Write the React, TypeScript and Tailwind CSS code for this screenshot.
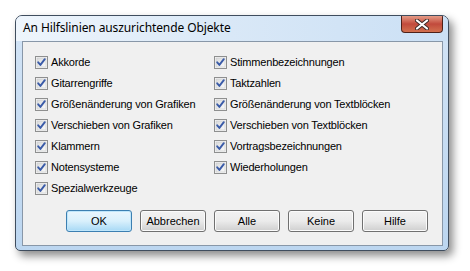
import React from 'react';

const leftItems = [
  'Akkorde',
  'Gitarrengriffe',
  'Größenänderung von Grafiken',
  'Verschieben von Grafiken',
  'Klammern',
  'Notensysteme',
  'Spezialwerkzeuge',
];

const rightItems = [
  'Stimmenbezeichnungen',
  'Taktzahlen',
  'Größenänderung von Textblöcken',
  'Verschieben von Textblöcken',
  'Vortragsbezeichnungen',
  'Wiederholungen',
];

const CheckBox = () => (
  <svg width="13" height="13" viewBox="0 0 13 13" className="shrink-0">
    <defs>
      <linearGradient id="cbfill" x1="0" y1="0" x2="1" y2="1">
        <stop offset="0" stopColor="#d9dadb" />
        <stop offset="1" stopColor="#fafafa" />
      </linearGradient>
    </defs>
    <rect x="0.5" y="0.5" width="12" height="12" fill="#f6f6f6" stroke="#8e8f8f" />
    <rect x="2" y="2" width="9" height="9" fill="url(#cbfill)" stroke="#c7c8c9" strokeWidth="0.6" />
    <path d="M3.2 6.3 L5.4 8.9 L9.8 3.2" fill="none" stroke="#3a5ba8" strokeWidth="1.9" strokeLinecap="round" strokeLinejoin="round" />
  </svg>
);

const Row = ({ label }: { label: string }) => (
  <div className="h-[21px] flex items-center gap-[3px]">
    <CheckBox />
    <span className="text-[11px] tracking-[-0.18px] text-black leading-none whitespace-nowrap">{label}</span>
  </div>
);

const Button = ({ label, primary }: { label: string; primary?: boolean }) => (
  <div
    className={
      primary
        ? 'w-[66px] h-[22px] rounded-[3px] border border-[#3c7fb1] bg-gradient-to-b from-[#eaf6fd] via-[#d9f0fc] to-[#a7d9f5] flex items-center justify-center text-[11px] text-black shadow-[inset_0_0_0_1px_#bfe6fb]'
        : 'w-[66px] h-[22px] rounded-[3px] border border-[#707070] bg-gradient-to-b from-[#f2f2f2] via-[#ebebeb] to-[#cfcfcf] flex items-center justify-center text-[11px] text-black shadow-[inset_0_0_0_1px_#fbfbfb]'
    }
  >
    {label}
  </div>
);

export default function App() {
  return (
    <div className="w-[470px] h-[271px] bg-white pt-[15px] pl-[15px]" style={{ fontFamily: '"Liberation Sans", Arial, sans-serif' }}>
      <div className="w-[434px] h-[236px] rounded-t-[7px] rounded-b-[5px] border border-[#3f4d5e] bg-gradient-to-b from-[#d3e4f6] to-[#bcd6f0] shadow-[4px_5px_9px_rgba(0,0,0,0.45)] flex flex-col overflow-hidden">
        {/* Title bar */}
        <div className="h-[25px] flex items-start justify-between bg-gradient-to-r from-[#eef5fc] via-[#d9e8f7] to-[#cbe0f5]">
          <div className="pl-[7px] pt-[6px] text-[12px] tracking-[-0.1px] text-black leading-none" style={{ fontFamily: '"Noto Sans", sans-serif' }}>
            An Hilfslinien auszurichtende Objekte
          </div>
          <div className="mr-[5px] w-[42px] h-[17px] rounded-b-[4px] border border-t-0 border-[#4e2119] bg-gradient-to-b from-[#e49a86] via-[#c14a3c] to-[#d2704f] flex items-center justify-center">
            <svg width="14" height="11" viewBox="0 0 14 11">
              <path d="M2 1.5 L12 9.5 M12 1.5 L2 9.5" stroke="#3b2a28" strokeWidth="4" strokeLinecap="round" />
              <path d="M2 1.5 L12 9.5 M12 1.5 L2 9.5" stroke="#ffffff" strokeWidth="2.2" strokeLinecap="round" />
            </svg>
          </div>
        </div>
        {/* Client area */}
        <div className="ml-[6px] mr-[5px] h-[205px] border border-[#8897a8] bg-[#f0f0f0] flex flex-col">
          <div className="flex pt-[10px] pl-[12px]">
            <div className="w-[179px] flex flex-col">
              {leftItems.map(item => (
                <Row key={item} label={item} />
              ))}
            </div>
            <div className="flex flex-col">
              {rightItems.map(item => (
                <Row key={item} label={item} />
              ))}
            </div>
          </div>
          <div className="flex justify-end gap-[8px] pr-[14px] mt-[11px]">
            <Button label="OK" primary />
            <Button label="Abbrechen" />
            <Button label="Alle" />
            <Button label="Keine" />
            <Button label="Hilfe" />
          </div>
        </div>
      </div>
    </div>
  );
}
